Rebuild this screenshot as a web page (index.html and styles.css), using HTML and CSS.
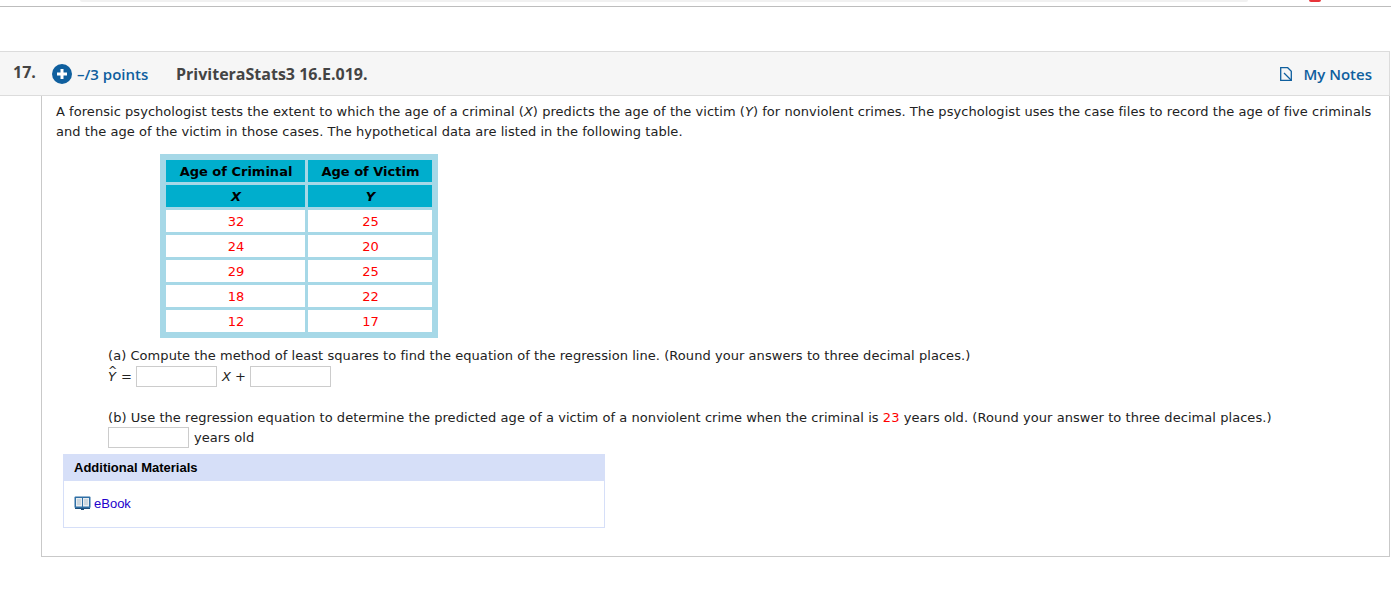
FILE: index.html
```html
<!DOCTYPE html>
<html>
    <head>
        <title>Question 17</title>
        <link rel="stylesheet" href="styles.css">
    </head>

    <body>
        <div class="top-strip">
            <div class="top-pill"></div>
            <div class="top-badge"></div>
        </div>

        <div class="q-head">
            <span class="q-num">17.</span>
            <svg class="plus-icon" width="20" height="20" viewBox="0 0 20 20">
                <circle cx="10" cy="10" r="10" fill="#0f5f9e"/>
                <path d="M10 5v10M5 10h10" stroke="#fff" stroke-width="3"/>
            </svg>
            <span class="q-points">&ndash;/3 points</span>
            <span class="q-code">PriviteraStats3 16.E.019.</span>
            <a class="q-notes">
                <svg width="12" height="14" viewBox="0 0 12 14">
                    <path d="M.7 .7h7l3.600 3.600v9H.7z" fill="none" stroke="#0f5f9e" stroke-width="1.300"/>
                    <path d="M4 6l7.500 7.500" stroke="#0f5f9e" stroke-width="1.300"/>
                </svg>
                My Notes
            </a>
        </div>

        <div class="q-body">
            <p class="intro">A forensic psychologist tests the extent to which the age of a criminal (<i>X</i>) predicts the age of the victim (<i>Y</i>) for nonviolent crimes. The psychologist uses the case files to record the age of five criminals and the age of the victim in those cases. The hypothetical data are listed in the following table.</p>

            <table class="data-table">
                <tr><th class="col-x">Age of Criminal</th><th class="col-y">Age of Victim</th></tr>
                <tr><th><i>X</i></th><th><i>Y</i></th></tr>
                <tr><td>32</td><td>25</td></tr>
                <tr><td>24</td><td>20</td></tr>
                <tr><td>29</td><td>25</td></tr>
                <tr><td>18</td><td>22</td></tr>
                <tr><td>12</td><td>17</td></tr>
            </table>

            <div class="part part-a">
                <div class="part-text">(a) Compute the method of least squares to find the equation of the regression line. (Round your answers to three decimal places.)</div>
                <div class="answer-row">
                    <span class="y-hat"><i>Y</i><span class="hat">^</span></span>
                    <span class="y-eq">=</span>
                    <input class="answer" type="text">
                    <span class="x-term"><i>X</i> +</span>
                    <input class="answer" type="text">
                </div>
            </div>

            <div class="part part-b">
                <div class="part-text">(b) Use the regression equation to determine the predicted age of a victim of a nonviolent crime when the criminal is <span class="red">23</span> years old. (Round your answer to three decimal places.)</div>
                <div class="answer-row">
                    <input class="answer" type="text">
                    <span>years old</span>
                </div>
            </div>

            <div class="materials">
                <div class="materials-head">Additional Materials</div>
                <div class="materials-body">
                    <svg width="17" height="14" viewBox="0 0 17 14">
                        <rect x="0.5" y="0.5" width="16" height="11.500" rx="1" fill="#2f6fa5"/>
                        <path d="M2 2h6v8.500H2zM9 2h6v8.500H9z" fill="#e9eef2"/>
                        <path d="M3 4h4M3 6h4M3 8h4M10 4h4M10 6h4M10 8h4" stroke="#9fb2c2" stroke-width="0.8"/>
                        <rect x="1" y="12" width="15" height="1" fill="#1d4f7c"/>
                        <rect x="7" y="12.500" width="3" height="1.500" fill="#1d4f7c"/>
                    </svg>
                    <a class="ebook">eBook</a>
                </div>
            </div>
        </div>
    </body>
</html>
```

FILE: styles.css
```css
html {
    height: 100%;
}
body {
    margin: 0px;
    background: #fff;
    font-family: "DejaVu Sans", Verdana, sans-serif;
    font-size: 13px;
    letter-spacing: 0.055px;
    color: #222;
    overflow: hidden;
}
.top-strip {
    position: relative;
    height: 6px;
    border-bottom: 1px solid #bdbdbd;
    margin-bottom: 44px;
}
.top-pill {
    position: absolute;
    left: 80px;
    top: 0px;
    width: 1168px;
    height: 2px;
    background: #f1f1f1;
    border-radius: 0 0 8px 8px;
}
.top-badge {
    position: absolute;
    left: 1309px;
    top: 0px;
    width: 12px;
    height: 2px;
    background: #e8343a;
    border-radius: 0 0 3px 3px;
}
.q-head {
    display: flex;
    align-items: center;
    height: 43px;
    margin-right: 1px;
    background: #f6f6f6;
    border-top: 1px solid #dcdcdc;
    border-bottom: 1px solid #dcdcdc;
    border-right: 1px solid #dcdcdc;
    font-family: "Open Sans", sans-serif;
    font-size: 15px;
    font-weight: 600;
    letter-spacing: 0px;
}
.q-num {
    width: 52px;
    padding-left: 13px;
    box-sizing: border-box;
    color: #444;
    font-size: 16px;
    font-weight: 700;
    margin-top: -3px;
}
.plus-icon {
    margin-right: 5px;
}
.q-points {
    width: 99px;
    color: #0f5f9e;
}
.q-code {
    color: #444;
    font-size: 16px;
    font-weight: 700;
}
.q-notes {
    margin-left: auto;
    margin-right: 17px;
    display: flex;
    align-items: center;
    gap: 11px;
    color: #0f5f9e;
}
.q-body {
    margin-left: 41px;
    margin-right: 1px;
    height: 461px;
    box-sizing: border-box;
    border-left: 1px solid #c9c9c9;
    border-right: 1px solid #c9c9c9;
    border-bottom: 1px solid #c9c9c9;
    padding: 6px 14px 0 14px;
}
.intro {
    margin: 0px;
    line-height: 20px;
    letter-spacing: 0.046px;
    color: #222;
}
.data-table {
    margin: 12px 0 0 104px;
    background: #a6d8e7;
    border-collapse: separate;
    border-spacing: 3px;
    padding: 3px;
    font-size: 13px;
    letter-spacing: 0px;
}
.data-table th {
    height: 22px;
    padding: 0px 0px 0px 1px;
    background: #00aecd;
    color: #000;
    font-weight: bold;
}
.data-table td {
    height: 22px;
    padding: 0px 0px 0px 1px;
    background: #fff;
    color: #f00;
    text-align: center;
}
.col-x {
    width: 138px;
}
.col-y {
    width: 123px;
}
.part {
    margin-left: 52px;
}
.part-a {
    margin-top: 8px;
}
.part-b {
    margin-top: 21px;
}
.part-b .answer-row {
    margin-top: -1px;
}
.part-text {
    line-height: 20px;
}
.answer-row {
    display: flex;
    align-items: center;
    gap: 5px;
    height: 21px;
}
.answer {
    width: 81px;
    height: 21px;
    box-sizing: border-box;
    margin: 0px;
    padding: 0px;
    border: 1px solid #ccc;
    background: #fff;
}
.y-hat {
    position: relative;
}
.hat {
    position: absolute;
    left: 0px;
    top: -5px;
    font-size: 11px;
}
.y-eq {
    margin-right: -1px;
}
.x-term {
    margin-right: -1px;
}
.red {
    color: #f00;
}
.materials {
    margin: 6px 0 0 7px;
    width: 542px;
    font-family: "Liberation Sans", Arial, sans-serif;
    letter-spacing: 0px;
}
.materials-head {
    height: 27px;
    line-height: 27px;
    padding-left: 11px;
    background: #d6dff8;
    color: #000;
    font-weight: bold;
}
.materials-body {
    display: flex;
    align-items: center;
    gap: 3px;
    height: 44px;
    padding: 0px 0px 2px 10px;
    border: 1px solid #d6dff8;
    border-top: 0px;
}
.ebook {
    color: #2200cc;
}
```
